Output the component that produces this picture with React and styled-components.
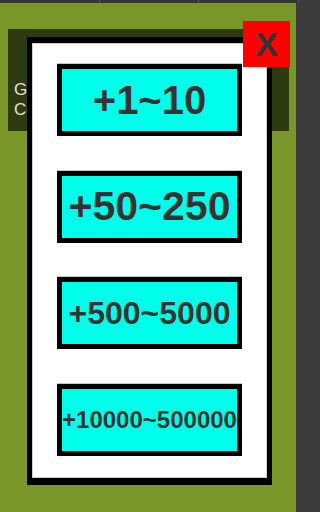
import React from "react";
import styled, { createGlobalStyle } from "styled-components";

const GlobalStyle = createGlobalStyle`
  html, body {
    margin: 0;
    padding: 0;
    background: #3a3a3a;
  }
`;

const options = [
  { label: "+1~10", size: 40 },
  { label: "+50~250", size: 41 },
  { label: "+500~5000", size: 32 },
  { label: "+10000~500000", size: 24 },
];

export default function App() {
  return (
    <>
      <GlobalStyle />
      <Screen>
        <TopBar>
          <Tab />
          <Tab />
          <Tab />
        </TopBar>
        <Body>
          <Stage>
            <InfoPanel>
              <InfoLine>Gold</InfoLine>
              <InfoLine>Coins</InfoLine>
            </InfoPanel>

            <Modal>
              <OptionList>
                {options.map((o) => (
                  <OptionButton key={o.label} $size={o.size}>
                    {o.label}
                  </OptionButton>
                ))}
              </OptionList>
            </Modal>

            <CloseButton>X</CloseButton>
          </Stage>
        </Body>
      </Screen>
    </>
  );
}

const Screen = styled.div`
  width: 299px;
  height: 512px;
  display: flex;
  flex-direction: column;
  background: #3a3a3a;
  overflow: hidden;
  font-family: "Liberation Sans", Arial, sans-serif;
`;

const TopBar = styled.div`
  height: 3px;
  display: flex;
  flex-shrink: 0;
`;

const Tab = styled.div`
  flex: 1;
  border-right: 1px solid #5a5a5a;
  background: #353535;
`;

const Body = styled.div`
  flex: 1;
  display: flex;
  padding-right: 3px;
`;

const Stage = styled.div`
  position: relative;
  flex: 1;
  background: #7a9628;
  padding: 26px 0 0 8px;
`;

const InfoPanel = styled.div`
  width: 281px;
  height: 102px;
  box-sizing: border-box;
  background: #2e3a10;
  padding: 51px 0 0 6px;
`;

const InfoLine = styled.div`
  color: #e2e2d8;
  font-size: 17px;
  line-height: 20px;
`;

const Modal = styled.div`
  position: absolute;
  left: 27px;
  top: 34px;
  width: 245px;
  height: 448px;
  box-sizing: border-box;
  background: #fff;
  border: 5px solid #000;
  border-top-width: 6px;
  border-bottom-width: 7px;
  box-shadow: inset 0 0 0 1px #d0d0d0;
`;

const OptionList = styled.div`
  height: 100%;
  box-sizing: border-box;
  display: flex;
  flex-direction: column;
  align-items: center;
  justify-content: space-between;
  padding: 21px 0 22px;
`;

const OptionButton = styled.div`
  width: 185px;
  height: 72px;
  box-sizing: border-box;
  display: flex;
  align-items: center;
  justify-content: center;
  background: #00ffea;
  border: 5px solid #000;
  box-shadow: 0 -1px 0 #c8c8c8;
  color: #333;
  font-weight: bold;
  font-size: ${(p) => p.$size}px;
  white-space: nowrap;
  letter-spacing: 0;
`;

const CloseButton = styled.div`
  position: absolute;
  left: 243px;
  top: 18px;
  width: 47px;
  height: 46px;
  display: flex;
  align-items: center;
  justify-content: center;
  background: #ff0000;
  color: #333;
  font-weight: bold;
  font-size: 34px;
  line-height: 1;
`;
